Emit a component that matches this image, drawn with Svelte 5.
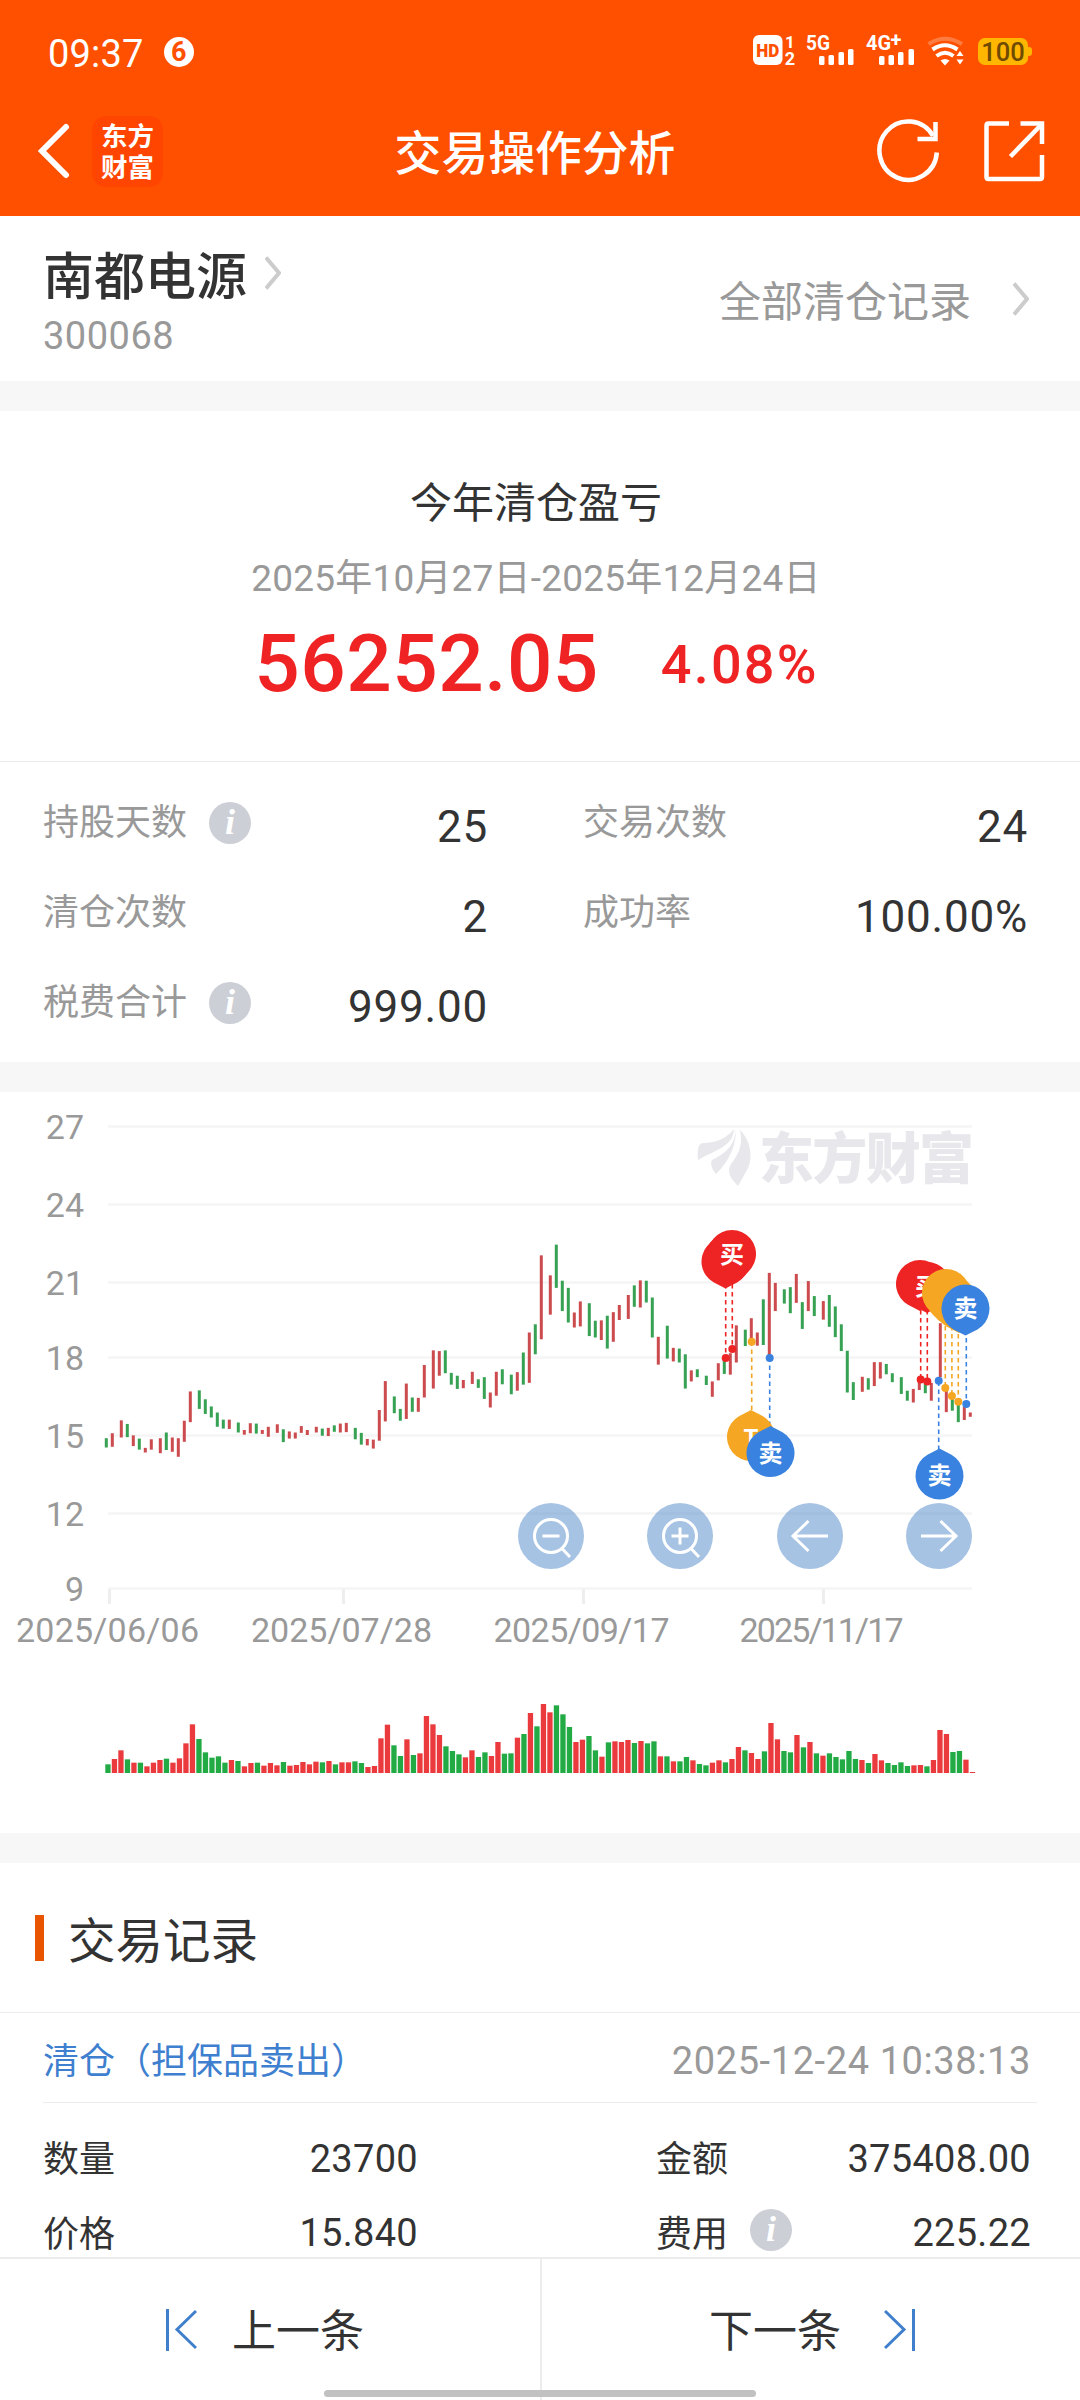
<script lang="ts">
  const stats = [
    { label: '持股天数', value: '25', info: true },
    { label: '交易次数', value: '24', info: false },
    { label: '清仓次数', value: '2', info: false },
    { label: '成功率', value: '100.00%', info: false },
    { label: '税费合计', value: '999.00', info: true },
  ];

  const record = [
    { label: '数量', value: '23700', info: false },
    { label: '金额', value: '375408.00', info: false },
    { label: '价格', value: '15.840', info: false },
    { label: '费用', value: '225.22', info: true },
  ];

  // colour + high-low, 2.8 units per pixel from the top of the plot
  const candles = `G1003-1029 R989-1027 R953-1001 G963-1000 R995-1025 G1004-1035 R1030-1043 R1006-1035 R1003-1045
    G987-1036 R1001-1041 R1003-1055 R954-1013 R872-958 G869-921 G894-935 G914-945 G931-971 G951-976 R951-977
    G959-987 R980-993 R961-989 G962-990 R980-991 R971-999 R964-988 G978-1014 R984-1004 R987-1004 R969-988
    R980-994 R971-987 G976-996 R974-997 G967-985 R962-987 R960-986 G974-1006 G988-1021 R1005-1023 R1007-1032
    R924-1010 R843-956 G886-933 G921-954 R850-949 G889-929 R890-929 R798-889 R757-864 R759-828 G757-821
    G820-853 G828-865 R840-863 R817-851 G838-862 G832-893 R875-917 R817-884 G810-852 G825-880 R818-870
    G763-853 R707-848 G684-768 R491-726 R547-657 G461-582 G562-647 G582-679 R651-693 R620-690 G625-717
    G674-721 R673-728 G660-752 R650-733 R630-672 R602-669 G575-635 R561-637 G562-623 G609-721 R719-797
    G688-780 R750-788 G752-791 G768-864 R813-844 G810-832 G828-854 R844-887 R793-841 G780-823 R765-825
    R687-791 G699-745 R667-735 R707-744 G614-742 R540-770 R568-647 G586-626 G580-653 R543-624 G622-697
    R563-647 G605-661 R619-671 G602-691 G634-720 G684-759 G758-875 G846-896 R831-873 G835-867 R790-857
    R790-836 G795-824 G821-846 G832-879 G870-898 R865-903 R840-868 G845-877 R848-898 R681-832 R870-930
    G888-926 G905-958 R915-952 R931-943`
    .split(/\s+/)
    .map((c, i) => {
      const [top, bottom] = c.slice(1).split('-').map(Number);
      return {
        x: 106.3 + 3 * Math.round((6.5 * i + 0.9) / 3),
        y: top / 2.8,
        h: (bottom - top) / 2.8,
        up: c[0] === 'R',
      };
    });

  // colour + height, 3 units per pixel
  const volumes = `G26 R42 R68 G41 R31 G31 R20 R31 R39 G43 R31 R44 R89 R146 G102 G62 G46 G50 G31 R39 G36 R20 R30 G31
    R22 R30 R23 G33 R22 R24 R33 R26 R34 G32 R36 G26 R32 R32 G35 G30 R18 R21 R104 R145 G83 G51 R101 G54 R59
    R171 R146 R114 G80 G66 G56 R47 R68 G48 G62 R51 R93 G58 G59 R106 G117 R180 G140 R207 R182 G203 G176 G138
    R93 R100 G111 G68 R49 G92 R95 R93 R99 G90 R96 G89 G95 R50 G50 R35 G35 G48 R38 G27 G23 R31 R38 G32 R42
    R78 G68 R60 R42 G65 R150 R101 G66 G62 R114 G77 R93 G59 R52 G59 G48 G41 G66 G42 R39 G30 R57 R38 G30 G24
    G32 G21 R23 R24 G20 R39 R129 R117 G63 G66 R40 R3`
    .split(/\s+/)
    .map((v, i) => ({ x: 105.3 + 6.5 * i, h: Number(v.slice(1)) / 3, up: v[0] === 'R' }));

  const prices = [
    { v: 27, y: 46.5 },
    { v: 24, y: 124.5 },
    { v: 21, y: 202.5 },
    { v: 18, y: 277.5 },
    { v: 15, y: 355.5 },
    { v: 12, y: 433.5 },
    { v: 9, y: 508.5 },
  ];

  const dates = [
    { text: '2025/06/06', x: 109, w: 183 },
    { text: '2025/07/28', x: 343, w: 181 },
    { text: '2025/09/17', x: 583, w: 176 },
    { text: '2025/11/17', x: 823, w: 164 },
  ];

  const RED = '#ee2424';
  const ORANGE = '#f5a623';
  const BLUE = '#3a82e0';

  const leads = [
    { x: 725.7, from: 196, to: 278, c: RED },
    { x: 732.3, from: 196, to: 269, c: RED },
    { x: 751.7, from: 330, to: 261.8, c: ORANGE },
    { x: 769.7, from: 346, to: 277.9, c: BLUE },
    { x: 920.7, from: 222, to: 299.5, c: RED },
    { x: 927.3, from: 222, to: 301.5, c: RED },
    { x: 938.7, from: 370, to: 300.7, c: BLUE },
    { x: 945.3, from: 230, to: 308, c: ORANGE },
    { x: 951.9, from: 230, to: 316, c: ORANGE },
    { x: 958.3, from: 230, to: 321.8, c: ORANGE },
    { x: 966.3, from: 250, to: 324, c: BLUE },
  ];

  const pins = [
    { x: 725.5, y: 181.5, c: RED, text: '', up: false },
    { x: 728.5, y: 178, c: RED, text: '', up: false },
    { x: 732, y: 174, c: RED, text: '买', up: false },
    { x: 751, y: 357, c: ORANGE, text: 'T', up: true },
    { x: 770.5, y: 373, c: BLUE, text: '卖', up: true },
    { x: 920, y: 204, c: RED, text: '', up: false },
    { x: 927, y: 206, c: RED, text: '买', up: false },
    { x: 946, y: 213, c: ORANGE, text: '', up: false },
    { x: 950, y: 218, c: ORANGE, text: '', up: false },
    { x: 954, y: 222, c: ORANGE, text: '', up: false },
    { x: 959, y: 226, c: ORANGE, text: '', up: false },
    { x: 965.5, y: 228.6, c: BLUE, text: '卖', up: false },
    { x: 939.5, y: 395.6, c: BLUE, text: '卖', up: true },
  ];
</script>

{#snippet info()}
  <span class="info">i</span>
{/snippet}

{#snippet chevron()}
  <svg class="chevron" width="16" height="34" viewBox="0 0 16 34">
    <path d="M1 1.5 L14 17 L1 32.5" fill="none" stroke="#ccc" stroke-width="4" />
  </svg>
{/snippet}

<div class="page">
  <header>
    <div class="status">
      <span class="time">09:37</span>
      <span class="count">6</span>
      <svg class="signals" width="300" height="60" viewBox="0 0 300 60">
        <g fill="#fff" font-weight="700">
          <rect x="8" y="11" width="29.5" height="30" rx="6" />
          <text x="22.8" y="32.5" font-size="19" font-weight="900" text-anchor="middle" fill="#ff5000" textLength="23" lengthAdjust="spacingAndGlyphs">HD</text>
          <text x="45" y="23.5" font-size="17" text-anchor="middle">1</text>
          <text x="45" y="41" font-size="18" text-anchor="middle">2</text>
          <text x="61" y="26" font-size="21" textLength="24" lengthAdjust="spacingAndGlyphs">5G</text>
          <rect x="74" y="32" width="5.5" height="9" rx="1.5" />
          <rect x="83.5" y="31" width="5.5" height="10" rx="1.5" />
          <rect x="93.5" y="28" width="5.5" height="13" rx="1.5" />
          <rect x="103" y="25" width="5.5" height="16" rx="1.5" />
          <text x="121" y="26" font-size="21" textLength="25" lengthAdjust="spacingAndGlyphs">4G</text>
          <text x="145.500" y="23" font-size="20">+</text>
          <rect x="134" y="32" width="5.5" height="9" rx="1.5" />
          <rect x="143.5" y="31" width="5.5" height="10" rx="1.5" />
          <rect x="153" y="28" width="5.5" height="13" rx="1.5" />
          <rect x="163.5" y="25" width="5.5" height="16" rx="1.5" />
          <path d="M195.5 36.5 Q200 33.5 204.5 36.5 L200 41.5Z" />
          <path d="M215 27 l3.5 5 h-7z M215 40.500 l3.500 -5 h-7z" />
        </g>
        <g fill="none" stroke="#fff" stroke-width="4">
          <path d="M183.500 20 Q200 9.500 217 20" stroke-opacity=".25" />
          <path d="M187.500 25.500 Q200 17 212.500 25.500" />
          <path d="M191.500 32 Q200 25.500 208.500 32" />
        </g>
        <rect x="233" y="14" width="50" height="27" rx="7" fill="#ffb600" />
        <rect x="281" y="23" width="6" height="9" rx="3" fill="#ffb600" />
        <text x="258" y="36.5" font-size="25.5" font-weight="500" text-anchor="middle" fill="#6f4a00">100</text>
      </svg>
    </div>
    <div class="nav">
      <svg width="36" height="56" viewBox="0 0 36 56">
        <path d="M31 4 L7 28 L31 52" fill="none" stroke="#fff" stroke-width="6" stroke-linecap="round" />
      </svg>
      <div class="logo">东方财富</div>
      <h1>交易操作分析</h1>
      <svg class="action" width="66" height="66" viewBox="0 0 66 66" fill="none" stroke="#fff" stroke-width="4.5">
        <path d="M61.800 34.500 A28.700 29.200 0 1 1 58 18" />
        <path d="M60.500 4 V21 H42.500" />
      </svg>
      <svg class="action" width="66" height="66" viewBox="0 0 66 66" fill="none" stroke="#fff" stroke-width="4.5">
        <path d="M28 5.500 H7.500 Q5.500 5.500 5.500 7.500 V59 Q5.500 61 7.500 61 H59 Q61 61 61 59 V37" />
        <path d="M39.500 5.500 H61 V26" />
        <path d="M29.500 38.500 L60 7" />
      </svg>
    </div>
  </header>

  <section class="stock">
    <div>
      <div class="name">南都电源 {@render chevron()}</div>
      <div class="code">300068</div>
    </div>
    <div class="all">全部清仓记录 {@render chevron()}</div>
  </section>

  <section class="profit">
    <h2>今年清仓盈亏</h2>
    <p class="range">2025年10月27日-2025年12月24日</p>
    <p class="total"><b>56252.05</b><span>4.08%</span></p>
  </section>

  <section class="stats">
    {#each stats as s}
      <div class="stat">
        <span class="label">{s.label}</span>
        {#if s.info}{@render info()}{/if}
        <span class="value">{s.value}</span>
      </div>
    {/each}
  </section>

  <section class="chart">
    <svg class="plot" width="1080" height="752" viewBox="0 0 1080 752">
      <g transform="translate(0 -12)">
        {#each prices as p}
          <rect x="108" y={p.y - 1.25} width="864" height="2.5" fill="#f5f5f5" />
          <text class="tick" x="84" y={p.y + 12} text-anchor="end">{p.v}</text>
        {/each}
        {#each dates as d}
          <rect x={d.x - 1} y="509" width="3" height="15" fill="#eee" />
          <text class="tick" x={d.x - 1.5} y="561.5" text-anchor="middle" textLength={d.w}>{d.text}</text>
        {/each}

        <g fill="#e7e7ec">
          <path d="M698 80 C697 66 699 63 705 63 C718 62 727 58 734 49 C733 67 715 70 698 80Z" />
          <path d="M736 49 C736 64 731 79 716 94 C712 90 710 83 712 80 C727 73 735 64 736 49Z" />
          <path d="M740 50 C752 62 753 80 747 90 L738 106 C731 98 726 93 731 84 C739 74 743 65 740 50Z" />
          <text class="brand" x="759" y="97.5" textLength="215">东方财富</text>
        </g>

        {#each candles as c}
          <rect x={c.x - 1.5} y={c.y} width="3" height={c.h} fill={c.up ? '#cb4b4e' : '#37a254'} />
        {/each}

        {#each leads as l}
          <line x1={l.x} x2={l.x} y1={l.from} y2={l.to} stroke={l.c} stroke-width="1.6" stroke-dasharray="4.5 3.5" />
          <circle cx={l.x} cy={l.to} r="4" fill={l.c} />
        {/each}

        {#each pins as p}
          <g transform="translate({p.x} {p.y})">
            <path
              d="M0 27 L-12 20.800 A24 24 0 1 1 12 20.800Z"
              fill={p.c}
              transform={p.up ? 'rotate(180)' : undefined}
            />
            <text class="pin" y="8.5" text-anchor="middle">{p.text}</text>
          </g>
        {/each}

        {#each volumes as v}
          <rect x={v.x} y={693 - v.h} width="5.3" height={v.h} fill={v.up ? '#ea3a3e' : '#22ab45'} />
        {/each}
      </g>
    </svg>
    <div class="controls">
      <button aria-label="缩小">
        <svg viewBox="0 0 66 66">
          <circle cx="33" cy="33" r="16.500" />
          <path d="M24.500 33 H41.500 M44.500 46 L52 54" />
        </svg>
      </button>
      <button aria-label="放大">
        <svg viewBox="0 0 66 66">
          <circle cx="33" cy="33" r="16.500" />
          <path d="M24.500 33 H41.500 M33 24.500 V41.500 M44.500 46 L52 54" />
        </svg>
      </button>
      <button aria-label="向左">
        <svg viewBox="0 0 66 66"><path d="M51 33 H16 M31.500 18 L16 33 L31.500 48" /></svg>
      </button>
      <button aria-label="向右">
        <svg viewBox="0 0 66 66"><path d="M15 33 H50 M34.500 18 L50 33 L34.500 48" /></svg>
      </button>
    </div>
  </section>

  <section class="records">
    <h3>交易记录</h3>
    <div class="record-head">
      <span class="kind">清仓（担保品卖出）</span>
      <span class="when">2025-12-24 10:38:13</span>
    </div>
    <div class="record">
      {#each record as r}
        <div class="cell">
          <span class="field">{r.label}</span>
          {#if r.info}{@render info()}{/if}
          <span class="num">{r.value}</span>
        </div>
      {/each}
    </div>
  </section>

  <footer>
    <div class="step">
      <svg width="32" height="44" viewBox="0 0 32 44">
        <path d="M2.500 1 V43 M31 3 L12 21.500 L31 40" />
      </svg>
      <span>上一条</span>
    </div>
    <div class="step next">
      <span>下一条</span>
      <svg width="32" height="44" viewBox="0 0 32 44">
        <path d="M29.500 1 V43 M1 3 L20 21.500 L1 40" />
      </svg>
    </div>
    <div class="home-bar"></div>
  </footer>
</div>

<style>
  :global(body) {
    background: #fff;
  }

  .page {
    width: 1080px;
    height: 2400px;
    display: flex;
    flex-direction: column;
    overflow: hidden;
    color: #333;
    background: #fff;
    font-family: Roboto, 'Noto Sans CJK SC', sans-serif;
  }

  h1, h2, h3, p {
    margin: 0;
    font-weight: 400;
  }

  header {
    flex: none;
    height: 216px;
    color: #fff;
    background: #ff5000;
  }
  .status {
    height: 108px;
    display: flex;
    align-items: center;
    padding: 0 35px 0 48px;
  }
  .time {
    font-size: 38px;
    letter-spacing: 0.2px;
  }
  .count {
    width: 30px;
    height: 30px;
    margin: -4px 0 0 20px;
    border-radius: 50%;
    background: #fff;
    color: #ff5000;
    font-size: 27px;
    font-weight: 700;
    line-height: 31px;
    text-align: center;
  }
  .signals {
    margin-left: auto;
  }
  .nav {
    height: 86px;
    display: flex;
    align-items: center;
    padding: 0 33px 0 35px;
  }
  .logo {
    width: 71px;
    height: 71px;
    box-sizing: border-box;
    margin-left: 21px;
    padding: 3px 8px 0;
    border-radius: 14px;
    background: #ff4500;
    font-family: 'Noto Sans CJK SC', sans-serif;
    font-size: 26.5px;
    font-weight: 700;
    line-height: 31px;
    text-align: center;
  }
  h1 {
    flex: 1;
    padding-left: 32px;
    font-size: 46.8px;
    font-weight: 500;
    line-height: 86px;
    text-align: center;
    margin-top: 6px;
  }
  .action {
    margin-top: -1px;
  }
  .action + .action {
    margin-left: 40px;
  }

  .stock {
    flex: none;
    height: 165px;
    box-sizing: border-box;
    display: flex;
    justify-content: space-between;
    padding: 0 51px 0 43px;
  }
  .name {
    display: flex;
    align-items: center;
    gap: 18px;
    height: 62px;
    margin-top: 26px;
    font-size: 51px;
    font-weight: 500;
  }
  .code {
    margin-top: 7px;
    font-size: 38px;
    line-height: 50px;
    letter-spacing: 0.5px;
    color: #999;
  }
  .all {
    display: flex;
    align-items: center;
    gap: 42px;
    font-size: 42px;
    color: #999;
  }

  .profit {
    flex: none;
    height: 381px;
    box-sizing: border-box;
    border-top: 30px solid #f7f7f7;
    border-bottom: 1px solid #e9e9e9;
    text-align: center;
  }
  h2 {
    margin-top: 61px;
    padding-right: 8px;
    font-size: 42px;
    line-height: 64px;
  }
  .range {
    margin-top: 13px;
    padding-right: 8px;
    font-size: 37px;
    line-height: 60px;
    letter-spacing: 0.2px;
    color: #999;
  }
  .total {
    display: flex;
    justify-content: center;
    align-items: center;
    gap: 62px;
    height: 100px;
    margin-top: 5px;
    padding-right: 7px;
    color: #ef2323;
    font-weight: 500;
  }
  .total b {
    font-size: 80px;
    font-weight: 500;
    letter-spacing: 0.5px;
  }
  .total span {
    font-size: 54px;
    letter-spacing: 2.2px;
  }

  .stats {
    flex: none;
    height: 300px;
    box-sizing: border-box;
    display: grid;
    grid-template-columns: 444px 444px;
    grid-auto-rows: 90px;
    column-gap: 96px;
    padding: 16px 43px 0;
  }
  .stat {
    display: flex;
    align-items: center;
  }
  .label {
    font-size: 36px;
    color: #999;
    margin-top: -9px;
  }
  .value {
    margin: 7px -1px 0 auto;
    font-size: 44px;
    letter-spacing: 0.8px;
  }
  .info {
    width: 42px;
    height: 42px;
    margin-left: 22px;
    border-radius: 50%;
    background: #cccfd5;
    color: #fff;
    font: italic 700 36px/40px 'Liberation Serif', serif;
    text-align: center;
  }

  .chart {
    position: relative;
    flex: none;
    height: 771px;
    box-sizing: border-box;
    border-top: 30px solid #f7f7f7;
  }
  .plot {
    display: block;
  }
  .tick {
    font-size: 34px;
    fill: #999;
  }
  .brand {
    font-family: 'Noto Sans CJK SC', sans-serif;
    font-size: 55px;
    font-weight: 900;
  }
  .pin {
    font-size: 24px;
    font-weight: 700;
    fill: #fff;
  }
  .controls {
    position: absolute;
    left: 518px;
    top: 411px;
    display: flex;
    gap: 63.4px;
  }
  button {
    width: 66px;
    height: 66px;
    padding: 0;
    border: 0;
    border-radius: 50%;
    background: rgba(60, 124, 196, 0.46);
  }
  button svg {
    display: block;
    fill: none;
    stroke: #fff;
    stroke-width: 3;
  }

  .records {
    flex: 1;
    min-height: 0;
    overflow: hidden;
    border-top: 30px solid #f7f7f7;
  }
  h3 {
    height: 149px;
    display: flex;
    align-items: center;
    padding-left: 35px;
    border-bottom: 1px solid #ececec;
    font-size: 47.5px;
  }
  h3::before {
    content: '';
    width: 9px;
    height: 46px;
    margin-right: 24px;
    background: #e85400;
  }
  .record-head {
    height: 89px;
    display: flex;
    justify-content: space-between;
    align-items: center;
    margin: 0 43px;
    padding-right: 7px;
    border-bottom: 1px solid #ececec;
  }
  .kind {
    font-size: 36px;
    color: #3f7fcf;
  }
  .when {
    margin: 6px -1px 0 0;
    font-size: 38px;
    letter-spacing: 0.6px;
    color: #999;
  }
  .record {
    display: grid;
    grid-template-columns: 374px 374px;
    grid-auto-rows: 74.5px;
    column-gap: 239px;
    padding: 17.5px 43px;
  }
  .cell {
    display: flex;
    align-items: center;
    font-size: 36px;
  }
  .cell .info {
    margin-top: -4px;
  }
  .field {
    margin-top: -3px;
  }
  .num {
    margin: 2px -1px 0 auto;
    font-size: 38px;
    letter-spacing: 0.3px;
  }

  footer {
    position: relative;
    flex: none;
    height: 143px;
    box-sizing: border-box;
    display: flex;
    border-top: 2px solid #ececec;
    background: #fff;
  }
  .step {
    width: 540px;
    display: flex;
    align-items: flex-start;
    gap: 35px;
    padding: 42px 0 0 165px;
    box-sizing: border-box;
    font-size: 44px;
    line-height: 62px;
  }
  .step svg {
    margin-top: 7px;
    fill: none;
    stroke: #3f7fcb;
    stroke-width: 3;
  }
  .next {
    gap: 43px;
    padding-left: 167px;
    border-left: 2px solid #ececec;
  }
  .home-bar {
    position: absolute;
    left: 324px;
    bottom: 3px;
    width: 432px;
    height: 7px;
    border-radius: 4px;
    background: #c1c1c1;
  }
</style>
